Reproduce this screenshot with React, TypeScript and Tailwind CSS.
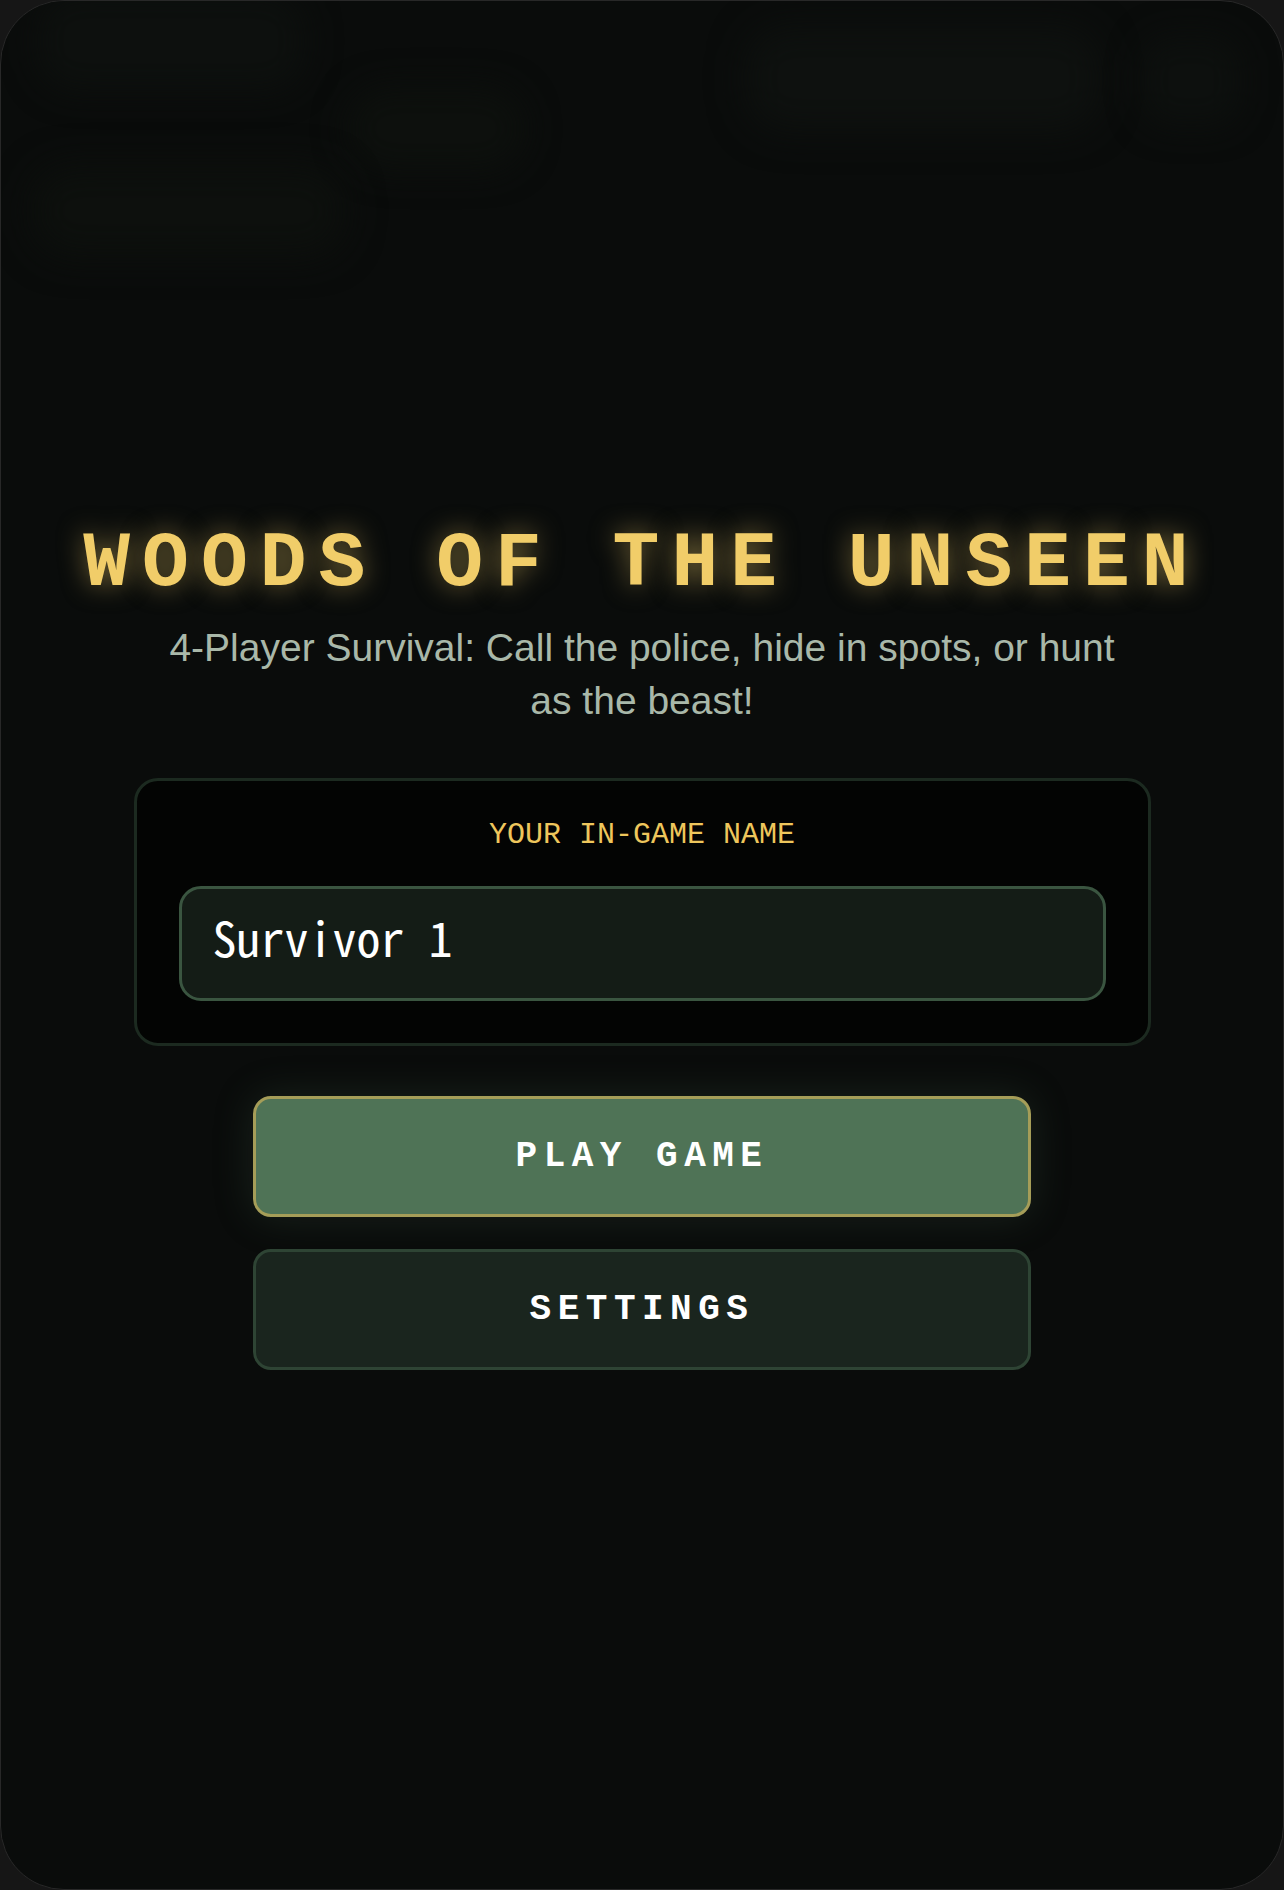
export default function App() {
  return (
    <div className="min-h-[1890px] w-full bg-[#161616]">
      <div className="relative h-[1890px] overflow-hidden rounded-[64px] border border-[#282828] bg-[#0a0c0b]">
        {/* faint misty tree silhouettes behind the menu */}
        <div className="pointer-events-none absolute inset-0">
          <div className="absolute left-[35px] top-[-10px] h-[100px] w-[270px] rounded-[40px] bg-[#0d100e] blur-[16px]" />
          <div className="absolute left-[345px] top-[85px] h-[85px] w-[180px] rounded-full bg-[#0d100d] blur-[16px]" />
          <div className="absolute left-[30px] top-[165px] h-[90px] w-[315px] rounded-[40px] bg-[#0d100d] blur-[18px]" />
          <div className="absolute left-[745px] top-[25px] h-[105px] w-[355px] rounded-[40px] bg-[#0e110f] blur-[18px]" />
          <div className="absolute left-[1140px] top-[35px] h-[90px] w-[100px] rounded-[30px] bg-[#0d100e] blur-[16px]" />
        </div>

        <main className="relative flex flex-col items-center pt-[524px]">
          <h1 className="whitespace-nowrap font-['Liberation_Mono',monospace] text-[78px] font-bold leading-[78px] tracking-[12px] text-[#f1cd69] [text-shadow:0_0_26px_rgba(241,205,105,0.5)]">
            WOODS OF THE UNSEEN
          </h1>
          <p className="mt-[18px] max-w-[980px] text-center font-['Liberation_Sans',Arial,sans-serif] text-[39px] leading-[53px] text-[#a9b8a9]">
            4-Player Survival: Call the police, hide in spots, or hunt as the beast!
          </p>

          <section className="mt-[51px] w-[1017px] rounded-[24px] border-[3px] border-[#1c2a20] bg-[#030403] px-[42px] pb-[42px] pt-[39px]">
            <label
              htmlFor="player-name"
              className="block text-center font-['Liberation_Mono',monospace] text-[30px] font-normal leading-[30px] text-[#eec65c]"
            >
              YOUR IN-GAME NAME
            </label>
            <input
              id="player-name"
              defaultValue="Survivor 1"
              className="mt-[36px] block h-[115px] w-full rounded-[22px] border-[3px] border-[#3a5540] bg-[#141c16] px-[31px] pb-[16px] pt-0 font-['Noto_Sans_Mono_CJK_SC',monospace] text-[48px] text-white outline-none"
            />
          </section>

          <div className="mt-[50px] flex w-[778px] flex-col gap-[32px]">
            <button className="flex h-[121px] w-full items-center justify-center rounded-[18px] border-[3px] border-[#a59d58] bg-[#4f7356] font-['Liberation_Mono',monospace] text-[36px] font-bold tracking-[6.5px] text-white shadow-[0_0_40px_rgba(79,115,86,0.22)]">
              PLAY GAME
            </button>
            <button className="flex h-[121px] w-full items-center justify-center rounded-[18px] border-[3px] border-[#2e4434] bg-[#1a251e] font-['Liberation_Mono',monospace] text-[36px] font-bold tracking-[6.5px] text-white">
              SETTINGS
            </button>
          </div>
        </main>
      </div>
    </div>
  );
}
